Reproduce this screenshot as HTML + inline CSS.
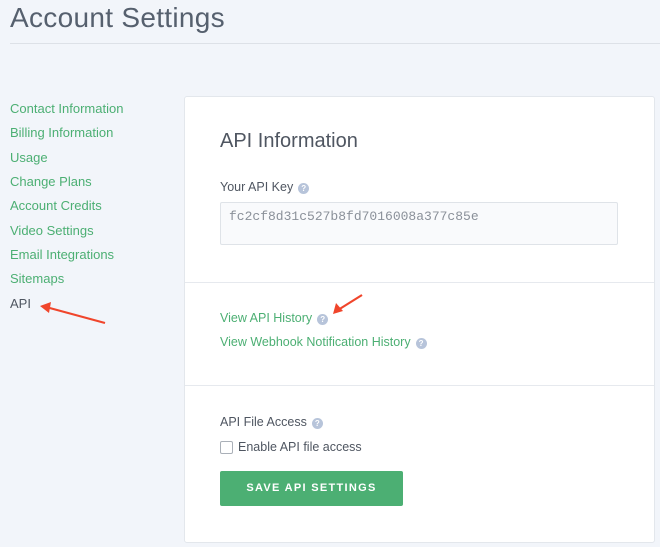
<!DOCTYPE html>
<html><head><style>
body{margin:0;width:660px;height:547px;background:#f2f5fa;font-family:"Liberation Sans",sans-serif;position:relative;overflow:hidden}
.a{position:absolute}
h1{position:absolute;left:10px;top:2px;margin:0;font-weight:normal;font-size:28px;color:#56606e;letter-spacing:0.3px}
.rule{left:10px;top:43px;width:650px;height:1px;background:#dde1e7}
.nav{left:10px;font-size:13px;color:#4caf73}
.card{left:184px;top:96px;width:469px;height:445px;background:#fff;border:1px solid #e3e7ec;border-radius:3px}
.div{left:0;width:469px;height:1px;background:#e6e9ee}
.q{display:inline-block;width:11px;height:11px;border-radius:50%;background:#b7c4da;color:#fff;font-size:8px;line-height:11px;text-align:center;font-weight:bold;vertical-align:0px;margin-left:5px}
.g{color:#4caf73;font-size:12.5px}
.l{color:#4f5661;font-size:12.5px}
</style></head><body>
<h1>Account Settings</h1>
<div class="a rule"></div>
<div class="a nav" style="top:101px">Contact Information</div>
<div class="a nav" style="top:125px">Billing Information</div>
<div class="a nav" style="top:150px">Usage</div>
<div class="a nav" style="top:174px">Change Plans</div>
<div class="a nav" style="top:198px">Account Credits</div>
<div class="a nav" style="top:223px">Video Settings</div>
<div class="a nav" style="top:247px">Email Integrations</div>
<div class="a nav" style="top:271px">Sitemaps</div>
<div class="a nav" style="top:296px;color:#4f5661">API</div>
<svg class="a" style="left:38px;top:302px" width="70" height="24"><line x1="67" y1="21" x2="8" y2="5" stroke="#f0452b" stroke-width="2.2"/><polygon points="2,4 13,0 11,11" fill="#f0452b"/></svg>
<div class="a card">
<div class="a" style="left:35px;top:33px;font-size:20px;color:#4f5661">API Information</div>
<div class="a l" style="left:35px;top:83px">Your API Key<span class="q">?</span></div>
<div class="a" style="left:35px;top:105px;width:398px;height:43px;border:1px solid #dfe3e8;border-radius:2px;background:#f9fafc;font-family:'Liberation Mono',monospace;font-size:13px;color:#8a9099;padding:6px 8px;box-sizing:border-box">fc2cf8d31c527b8fd7016008a377c85e</div>
<div class="a div" style="top:185px"></div>
<div class="a g" style="left:35px;top:214px">View API History<span class="q">?</span></div>
<svg class="a" style="left:145px;top:196px" width="36" height="24"><line x1="32" y1="2" x2="8" y2="17" stroke="#f0452b" stroke-width="2.2"/><polygon points="3,21 6,10 13,18" fill="#f0452b"/></svg>
<div class="a g" style="left:35px;top:238px">View Webhook Notification History<span class="q">?</span></div>
<div class="a div" style="top:288px"></div>
<div class="a l" style="left:35px;top:318px">API File Access<span class="q">?</span></div>
<div class="a" style="left:35px;top:344px;width:11px;height:11px;border:1px solid #aab0b8;border-radius:2px;background:#fff"></div>
<div class="a l" style="left:53px;top:343px">Enable API file access</div>
<div class="a" style="left:35px;top:374px;width:183px;height:35px;background:#4caf73;border-radius:2px;color:#fff;font-size:11px;font-weight:bold;letter-spacing:1.3px;text-align:center;line-height:35px">SAVE API SETTINGS</div>
</div>
</body></html>
